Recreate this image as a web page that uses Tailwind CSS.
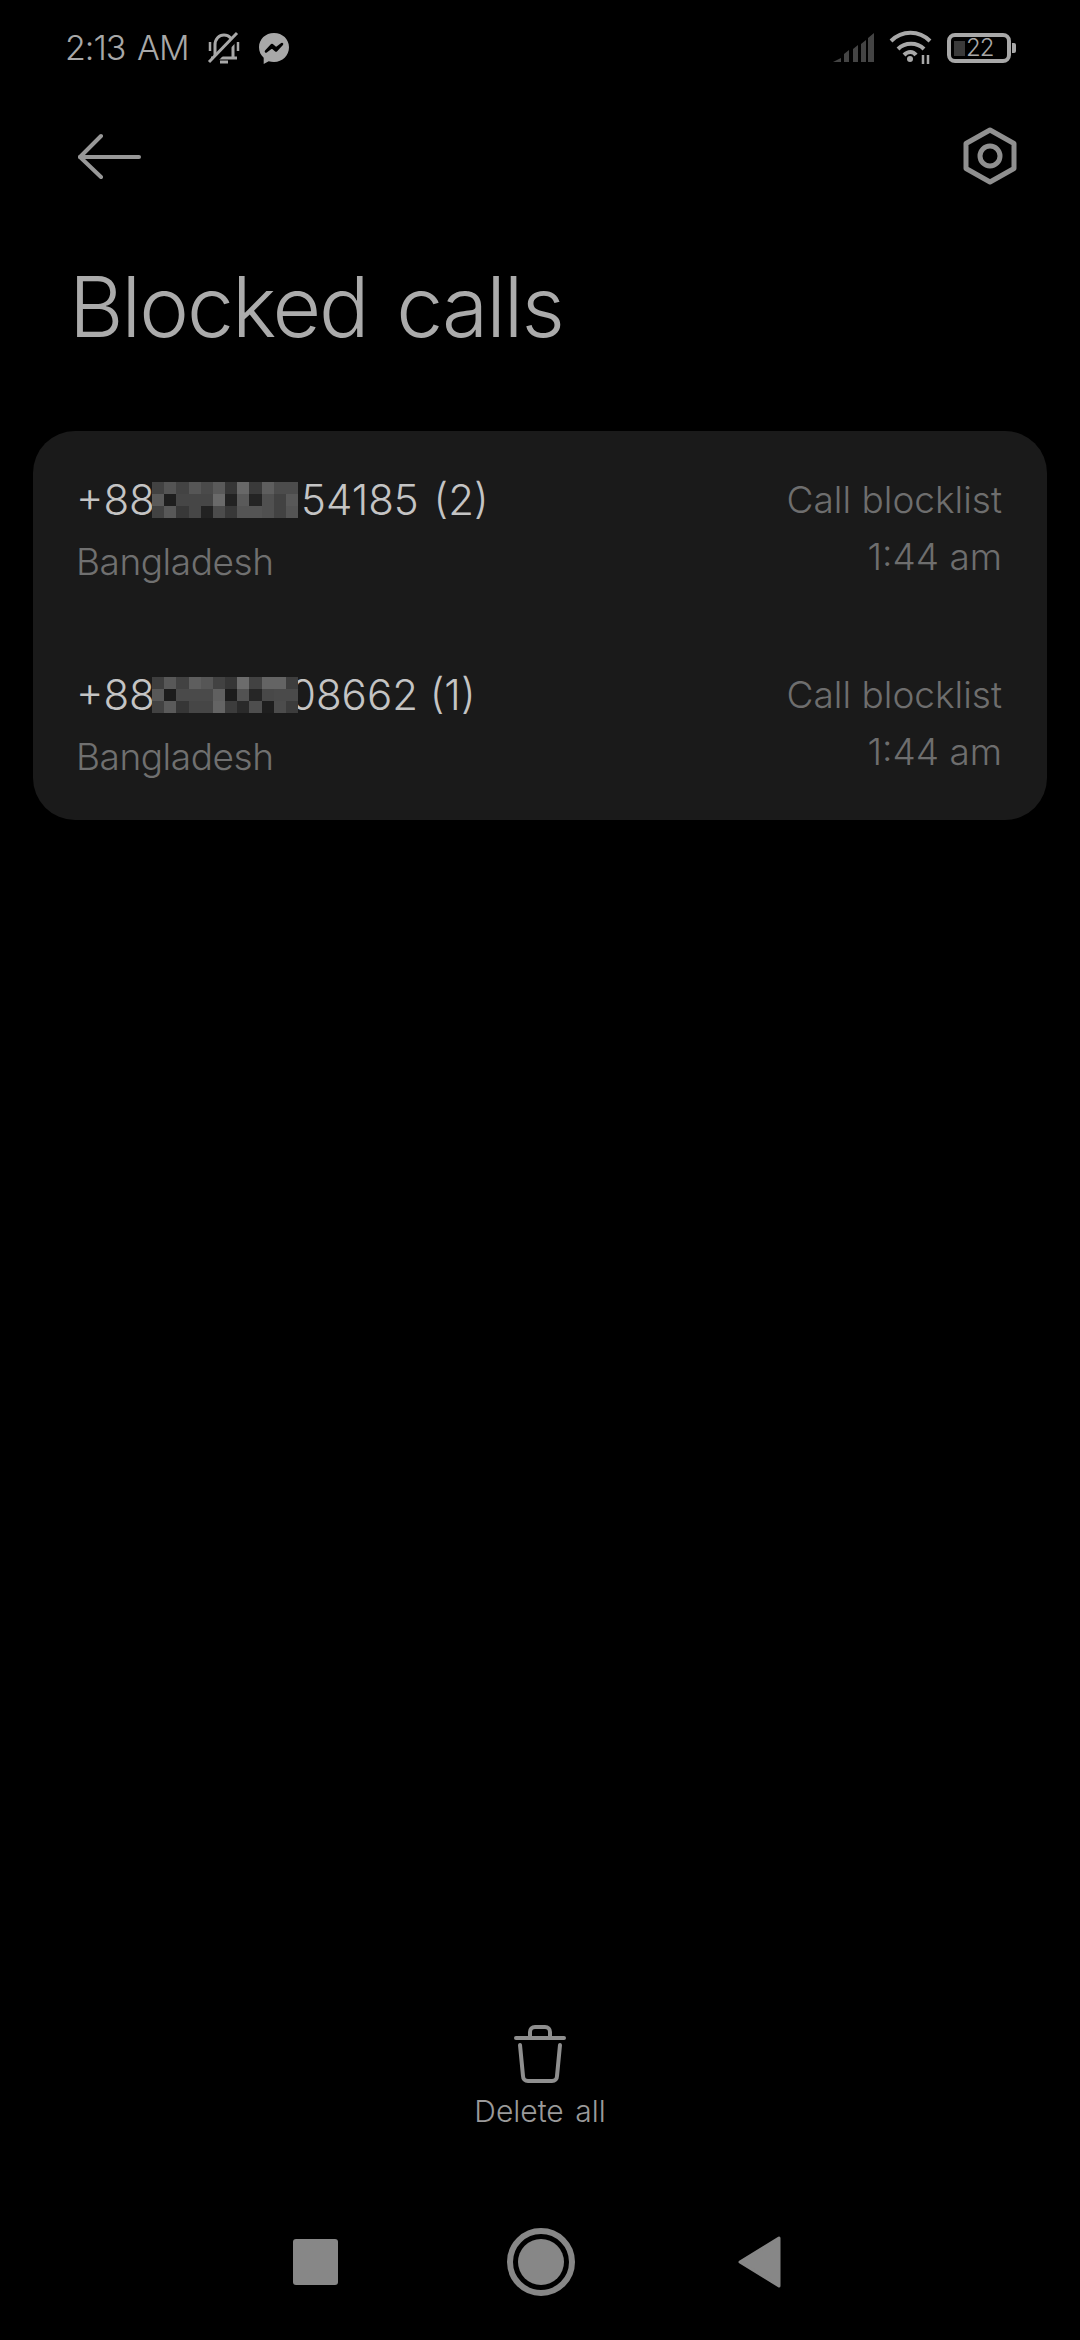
<!DOCTYPE html>
<html lang="en">

<head>
    <meta charset="UTF-8">
    <meta name="viewport" content="width=device-width, initial-scale=1.0">
    <title>Blocked calls</title>
    <script src="https://cdn.jsdelivr.net/npm/@tailwindcss/browser@4"></script>
</head>

<body class="bg-black">
    <div class="w-[1080px] h-[2340px] flex flex-col bg-black font-['Inter',sans-serif] font-light overflow-hidden">

        <!-- status bar -->
        <div class="h-[96px] pl-[65px] pr-[64px] flex items-center text-[#a8a8a8]">
            <span class="w-[122px] text-[34px] leading-none tracking-[-1px] [word-spacing:3px] whitespace-nowrap">2:13 AM</span>
            <svg class="ml-[19px] w-[36px] h-[36px]" viewBox="0 0 36 36" fill="none" stroke="#a8a8a8" stroke-width="3">
                <path d="M9 27V15c0-6 4-10 9-10s9 4 9 10v12" />
                <path d="M5 28h26" />
                <path d="M14 32h8" />
                <path d="M4 12v9M32 12v9" stroke-width="2.500" />
                <path d="M6 33L34 4" stroke="#000" stroke-width="6" />
                <path d="M3 32L31 3" />
            </svg>
            <svg class="ml-[16px] w-[32px] h-[33px]" viewBox="0 0 32 33">
                <path fill="#a8a8a8" d="M16 1C7.500 1 1 7.200 1 15.300c0 4.300 1.800 7.900 4.700 10.500V32l5-2.800c1.700.5 3.400.8 5.300.8 8.500 0 15-6.400 15-14.700C31 7.200 24.500 1 16 1z" />
                <path fill="none" stroke="#000" stroke-width="2.600" stroke-linejoin="round" d="M8 19.500l6-6.500 4 3.500L24 12l-6 6.500-4-3.500z" />
            </svg>
            <div class="flex-1"></div>
            <svg class="w-[42px] h-[30px]" viewBox="0 0 42 30" fill="#444">
                <path d="M0 29l8-4v4zM11 29V21l5-4v12zM20 29V16l5-4v17zM28 29V11l5-4v22zM35 29V5l6-5v29z" />
            </svg>
            <svg class="ml-[14px] w-[44px] h-[36px]" viewBox="0 0 44 36" fill="none" stroke="#a8a8a8" stroke-width="4">
                <path d="M2 11C13 0 30 0 41 11" />
                <path d="M9 19C16 12 28 12 35 19" />
                <path d="M15 25C19 21 24 21 27 25" />
                <circle cx="21" cy="29" r="3" fill="#a8a8a8" stroke="none" />
                <path d="M34 25v9M39 25v9" stroke-width="2.500" />
            </svg>
            <div class="ml-[14px] w-[64px] h-[30px] rounded-[8px] border-[4px] border-[#a8a8a8] pl-[3px] flex items-center">
                <div class="w-[11px] h-[15px] shrink-0 bg-[#3a3a3a]"></div>
                <span class="ml-[1px] text-[24px] leading-none tracking-[-1px]">22</span>
            </div>
            <div class="ml-[1px] w-[4px] h-[10px] rounded-r-[2px] bg-[#a8a8a8]"></div>
        </div>

        <!-- action bar -->
        <div class="h-[120px] pl-[78px] pr-[62px] flex items-center justify-between">
            <svg class="w-[64px] h-[46px]" viewBox="0 0 64 46" fill="none" stroke="#989898" stroke-width="4" stroke-linecap="round" stroke-linejoin="round">
                <path d="M2 24h59" />
                <path d="M23 3L2 24l21 20" />
            </svg>
            <svg class="w-[56px] h-[58px]" viewBox="0 0 56 58" fill="none" stroke="#8f8f8f" stroke-width="5" stroke-linejoin="round">
                <path d="M28 3l24 13.500v25L28 55 4 41.500v-25z" />
                <circle cx="28" cy="29" r="10" />
            </svg>
        </div>

        <h1 class="ml-[69px] mt-[41px] text-[84px] leading-[100px] tracking-[-2px] [word-spacing:7px] text-[#ababab]">Blocked calls</h1>

        <!-- list -->
        <div class="mt-[74px] mx-[33px] h-[389px] rounded-[42px] bg-[#1a1a1a] pl-[43px] pr-[45px] pt-[45px]">
            <div class="h-[195px] flex justify-between">
                <div>
                    <div class="flex items-center h-[48px] text-[42px] leading-none text-[#c4c4c4]">
                        <span class="w-[76px]">+88</span>
                        <div class="relative z-10 w-[146px] h-[36px] grid grid-cols-12 grid-rows-3">
                            <div class="bg-[#424242]"></div><div class="bg-[#545454]"></div><div class="bg-[#434343]"></div><div class="bg-[#565656]"></div><div class="bg-[#4a4a4a]"></div><div class="bg-[#5a5a5a]"></div><div class="bg-[#363636]"></div><div class="bg-[#686868]"></div><div class="bg-[#3a3a3a]"></div><div class="bg-[#5e5e5e]"></div><div class="bg-[#4c4c4c]"></div><div class="bg-[#4c4c4c]"></div>
                            <div class="bg-[#5a5a5a]"></div><div class="bg-[#1e1e1e]"></div><div class="bg-[#464646]"></div><div class="bg-[#464646]"></div><div class="bg-[#464646]"></div><div class="bg-[#6a6a6a]"></div><div class="bg-[#222222]"></div><div class="bg-[#5a5a5a]"></div><div class="bg-[#242424]"></div><div class="bg-[#505050]"></div><div class="bg-[#424242]"></div><div class="bg-[#585858]"></div>
                            <div class="bg-[#424242]"></div><div class="bg-[#585858]"></div><div class="bg-[#383838]"></div><div class="bg-[#464646]"></div><div class="bg-[#222222]"></div><div class="bg-[#4c4c4c]"></div><div class="bg-[#383838]"></div><div class="bg-[#545454]"></div><div class="bg-[#545454]"></div><div class="bg-[#505050]"></div><div class="bg-[#424242]"></div><div class="bg-[#545454]"></div>
                        </div>
                        <span class="ml-[3px] whitespace-nowrap [word-spacing:3px]">54185 (2)</span>
                    </div>
                    <div class="mt-[15px] text-[37px] leading-[46px] tracking-[-0.45px] text-[#707070]">Bangladesh</div>
                </div>
                <div class="-mt-[5px] text-right text-[37px] leading-[57px] text-[#6e6e6e]">
                    <div>Call blocklist</div>
                    <div>1:44 am</div>
                </div>
            </div>
            <div class="flex justify-between">
                <div>
                    <div class="flex items-center h-[48px] text-[42px] leading-none text-[#c4c4c4]">
                        <span class="w-[76px]">+88</span>
                        <div class="relative z-10 w-[146px] h-[36px] grid grid-cols-12 grid-rows-3">
                            <div class="bg-[#3e3e3e]"></div><div class="bg-[#585858]"></div><div class="bg-[#424242]"></div><div class="bg-[#5e5e5e]"></div><div class="bg-[#565656]"></div><div class="bg-[#424242]"></div><div class="bg-[#363636]"></div><div class="bg-[#6c6c6c]"></div><div class="bg-[#424242]"></div><div class="bg-[#646464]"></div><div class="bg-[#646464]"></div><div class="bg-[#3e3e3e]"></div>
                            <div class="bg-[#585858]"></div><div class="bg-[#1c1c1c]"></div><div class="bg-[#4a4a4a]"></div><div class="bg-[#4a4a4a]"></div><div class="bg-[#4a4a4a]"></div><div class="bg-[#606060]"></div><div class="bg-[#1c1c1c]"></div><div class="bg-[#525252]"></div><div class="bg-[#262626]"></div><div class="bg-[#484848]"></div><div class="bg-[#4a4a4a]"></div><div class="bg-[#4a4a4a]"></div>
                            <div class="bg-[#424242]"></div><div class="bg-[#5a5a5a]"></div><div class="bg-[#363636]"></div><div class="bg-[#464646]"></div><div class="bg-[#464646]"></div><div class="bg-[#646464]"></div><div class="bg-[#3c3c3c]"></div><div class="bg-[#2a2a2a]"></div><div class="bg-[#4e4e4e]"></div><div class="bg-[#1e1e1e]"></div><div class="bg-[#4c4c4c]"></div><div class="bg-[#3c3c3c]"></div>
                        </div>
                        <span class="-ml-[8px] whitespace-nowrap">08662 (1)</span>
                    </div>
                    <div class="mt-[15px] text-[37px] leading-[46px] tracking-[-0.45px] text-[#707070]">Bangladesh</div>
                </div>
                <div class="-mt-[5px] text-right text-[37px] leading-[57px] text-[#6e6e6e]">
                    <div>Call blocklist</div>
                    <div>1:44 am</div>
                </div>
            </div>
        </div>

        <div class="flex-1"></div>

        <!-- delete all -->
        <div class="flex flex-col items-center">
            <svg class="w-[52px] h-[58px]" viewBox="0 0 52 58" fill="none" stroke="#8f8f8f" stroke-width="4" stroke-linejoin="round" stroke-linecap="round">
                <path d="M2 13h48" />
                <path d="M16 13V7c0-3 2-5 5-5h10c3 0 5 2 5 5v6" />
                <path d="M6 20l3 31c0 3 2 5 5 5h24c3 0 5-2 5-5l3-31" />
            </svg>
            <span class="mt-[9px] text-[30px] leading-[38px] [word-spacing:3px] text-[#9a9a9a]">Delete all</span>
        </div>

        <!-- nav bar -->
        <div class="mt-[97px] h-[70px] mb-[43px] pl-[293px] flex items-center">
            <div class="w-[45px] h-[46px] rounded-[3px] bg-[#878787]"></div>
            <div class="ml-[169px] w-[68px] h-[68px] rounded-full border-[6px] border-[#878787] flex items-center justify-center">
                <div class="w-[46px] h-[46px] shrink-0 rounded-full bg-[#878787]"></div>
            </div>
            <svg class="ml-[163px] w-[43px] h-[54px]" viewBox="0 0 43 54" fill="#878787" stroke="#878787" stroke-width="3" stroke-linejoin="round">
                <path d="M2 27L41 3v48z" />
            </svg>
        </div>
    </div>
</body>

</html>
